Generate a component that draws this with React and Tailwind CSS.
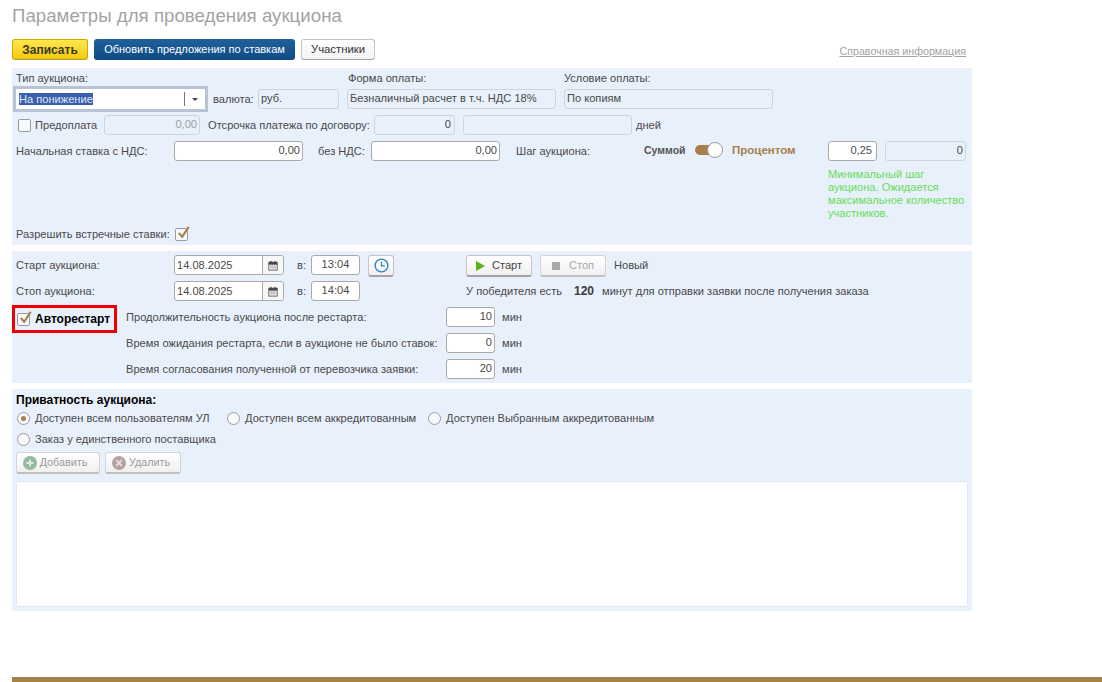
const Field = ({ className = '', children, off = false, left = false }) => (
  <div
    className={`h-5 shrink-0 rounded-[3px] border flex items-center px-1 leading-none whitespace-nowrap ${
      off ? 'bg-[#e8f0fb] border-[#cfd5dc]' : 'bg-white border-[#a9a9a9]'
    } ${left ? 'justify-start' : 'justify-end'} ${className}`}
  >
    {children}
  </div>
)

const Check = ({ checked = false, className = '' }) => (
  <span className={`shrink-0 relative block w-[13px] h-[13px] rounded-[2px] border border-[#9c9c9c] bg-[#f6f8fb] ${className}`}>
    {checked && (
      <svg viewBox="0 0 16 16" className="absolute left-[0px] top-[-4px] w-[15px] h-[15px]" fill="none">
        <path d="M3 8.5 L6.6 12.5 L13.5 2" stroke="#a67f4b" strokeWidth="2.2" />
      </svg>
    )}
  </span>
)

const Radio = ({ checked = false }) => (
  <span className="shrink-0 w-[13px] h-[13px] rounded-full border border-[#9c9c9c] bg-[#f8f9fb] flex items-center justify-center">
    {checked && <span className="w-[5px] h-[5px] rounded-full bg-[#a67f4b]" />}
  </span>
)

const Calendar = () => (
  <svg viewBox="0 0 12 12" className="w-[10px] h-[11px]">
    <rect x="1" y="2" width="10" height="9.5" fill="#fff" stroke="#444" />
    <rect x="1" y="2" width="10" height="3" fill="#444" />
    <rect x="3" y="0.5" width="1.4" height="2.5" fill="#444" />
    <rect x="7.6" y="0.5" width="1.4" height="2.5" fill="#444" />
    <path d="M3 6.6h1.2M5.4 6.6h1.2M7.8 6.6h1.2M3 8.8h1.2M5.4 8.8h1.2M7.8 8.8h1.2" stroke="#444" strokeWidth="1.2" />
  </svg>
)

const DateField = ({ value }) => (
  <div className="h-5 w-[110px] shrink-0 rounded-[3px] border border-[#a9a9a9] bg-white flex items-center">
    <span className="flex-1 pl-[2px]">{value}</span>
    <span className="w-[21px] h-full border-l border-[#a9a9a9] flex items-center justify-center bg-[#f7f7f7] rounded-r-[3px]">
      <Calendar />
    </span>
  </div>
)

const GrayButton = ({ className = '', children }) => (
  <div className={`h-[22px] shrink-0 rounded-[3px] border border-[#c4c4c4] border-b-[#a3a3a3] border-b-2 bg-gradient-to-b from-white to-[#f0f0f0] flex items-center justify-center whitespace-nowrap ${className}`}>
    {children}
  </div>
)

const DelayRow = ({ label, value }) => (
  <div className="h-5 flex items-center">
    <span className="w-[320px] shrink-0 whitespace-nowrap">{label}</span>
    <Field className="w-[49px] !px-[2px]">{value}</Field>
    <span className="ml-[7px]">мин</span>
  </div>
)

const App = () => {
  return (
    <div className="w-[1102px] h-[682px] bg-white overflow-hidden flex flex-col pl-3 text-[11.1px] text-[#4a4a4a] font-['Liberation_Sans',Arial,sans-serif]">
      <div className="h-[39px] shrink-0 pt-[5px] text-[18.7px] leading-[22px] text-[#a3a3a3]">Параметры для проведения аукциона</div>

      <div className="h-[29px] shrink-0 flex items-start w-[960px]">
        <div className="h-[21px] w-[76px] rounded-[3px] border border-[#c9a800] border-b-[#a89a4a] bg-gradient-to-b from-[#ffe84a] to-[#f5c800] flex items-center justify-center font-bold text-[12px] text-[#3a3a20]">Записать</div>
        <div className="h-[21px] w-[201px] ml-[6px] rounded-[3px] bg-gradient-to-b from-[#1f609e] to-[#0e4b84] flex items-center justify-center text-white text-[11px]">Обновить предложения по ставкам</div>
        <div className="h-[21px] w-[74px] ml-[6px] rounded-[3px] border border-[#c4c4c4] border-b-[#a3a3a3] bg-gradient-to-b from-white to-[#f2f2f2] flex items-center justify-center text-[#333] text-[11.3px]">Участники</div>
        <a className="ml-auto mr-[6px] mt-[5px] text-[10.7px] text-[#a3a3a3] underline leading-[14px]">Справочная информация</a>
      </div>

      {/* Тип аукциона, оплата, ставки */}
      <section className="w-[960px] h-[177px] shrink-0 bg-[#e8f0fb] flex flex-col">
        <div className="h-[21px] flex items-center pl-1 shrink-0">
          <span className="w-[332px]">Тип аукциона:</span>
          <span className="w-[216px]">Форма оплаты:</span>
          <span>Условие оплаты:</span>
        </div>
        <div className="h-5 flex items-center pl-1 shrink-0">
          <div className="w-[189px] h-5 shrink-0 bg-white ring-3 ring-[#b8c4d4] flex items-center">
            <span className="flex-1 pl-[3px]"><span className="bg-[#3a5fb0] text-[#dfe6f5]">На понижение</span></span>
            <span className="w-[21px] h-[14px] border-l border-[#777] flex items-center justify-center">
              <span className="border-x-[3px] border-x-transparent border-t-[3px] border-t-[#444]" />
            </span>
          </div>
          <span className="ml-2 w-[45px] shrink-0">валюта:</span>
          <Field off left className="w-[81px] !px-[2px]">руб.</Field>
          <Field off left className="w-[209px] ml-2 !px-[2px]">Безналичный расчет в т.ч. НДС 18%</Field>
          <Field off left className="w-[209px] ml-2 !px-[2px]">По копиям</Field>
        </div>
        <div className="h-5 mt-[6px] flex items-center pl-[6px] shrink-0">
          <Check />
          <span className="ml-[4px] w-[69px] shrink-0">Предоплата</span>
          <Field off className="w-[96px] text-[#9aa0a6] !px-[2px]">0,00</Field>
          <span className="ml-2 w-[166px] shrink-0 whitespace-nowrap">Отсрочка платежа по договору:</span>
          <Field off className="w-[81px] !px-[3px]">0</Field>
          <Field off className="w-[169px] ml-2" />
          <span className="ml-1">дней</span>
        </div>
        <div className="h-5 mt-[6px] flex items-center pl-1 shrink-0">
          <span className="w-[158px] shrink-0">Начальная ставка с НДС:</span>
          <Field className="w-[129px] !px-[2px]">0,00</Field>
          <span className="ml-[15px] w-[53px] shrink-0">без НДС:</span>
          <Field className="w-[129px] !px-[2px]">0,00</Field>
          <span className="ml-[16px] w-[128px] shrink-0">Шаг аукциона:</span>
          <span className="w-[51px] shrink-0 font-bold text-[10.5px] text-[#555]">Суммой</span>
          <span className="relative w-[28px] h-[16px] shrink-0 -translate-y-[1px]">
            <span className="absolute left-0 top-[3px] w-[20px] h-[10px] rounded-full bg-[#a67f4b]" />
            <span className="absolute right-0 top-0 w-[16px] h-[16px] rounded-full bg-white border border-[#9a9a9a]" />
          </span>
          <span className="ml-[9px] w-[96px] shrink-0 font-bold text-[11.5px] text-[#a67f4b]">Процентом</span>
          <Field className="w-[49px]">0,25</Field>
          <Field off className="w-[81px] ml-2 !px-[2px]">0</Field>
        </div>
        <div className="mt-[7px] ml-[816px] w-[140px] h-[52px] shrink-0 leading-[13px] text-[#66dd55]">
          Минимальный шаг<br />аукциона. Ожидается<br />максимальное количество<br />участников.
        </div>
        <div className="mt-[4px] h-5 flex items-center pl-1 shrink-0">
          <span className="w-[159px] shrink-0 whitespace-nowrap">Разрешить встречные ставки:</span>
          <Check checked />
        </div>
      </section>

      {/* Старт и стоп */}
      <section className="w-[960px] h-[132px] mt-[6px] shrink-0 bg-[#e8f0fb] flex flex-col pt-1">
        <div className="h-5 flex items-center pl-1 shrink-0">
          <span className="w-[158px] shrink-0">Старт аукциона:</span>
          <DateField value="14.08.2025" />
          <span className="ml-[13px] w-[14px] shrink-0">в:</span>
          <Field left className="w-[49px] !justify-center">13:04</Field>
          <div className="ml-2 h-5 flex items-start">
            <GrayButton className="w-[26px]">
              <svg viewBox="0 0 16 16" className="w-[15px] h-[15px]" fill="none" stroke="#2a86c8" strokeWidth="1.5">
                <circle cx="8" cy="8" r="6.8" />
                <path d="M8 4v4.4h3.6" />
              </svg>
            </GrayButton>
          </div>
          <div className="ml-[72px] h-5 flex items-start">
            <GrayButton className="w-[66px] gap-[7px] text-[#444]">
              <span className="border-y-[5px] border-y-transparent border-l-[9px] border-l-[#5cb312]" />
              Старт
            </GrayButton>
            <GrayButton className="w-[66px] ml-2 gap-[9px] text-[#a8a8a8] border-[#d4d4d4] border-b-[#c0c0c0]">
              <span className="w-[8px] h-[8px] bg-[#a9a9a9]" />
              Стоп
            </GrayButton>
          </div>
          <span className="ml-2">Новый</span>
        </div>
        <div className="h-5 mt-[6px] flex items-center pl-1 shrink-0">
          <span className="w-[158px] shrink-0">Стоп аукциона:</span>
          <DateField value="14.08.2025" />
          <span className="ml-[13px] w-[14px] shrink-0">в:</span>
          <Field left className="w-[49px] !justify-center">14:04</Field>
          <span className="ml-[106px] w-[108px] shrink-0 whitespace-nowrap">У победителя есть</span>
          <b className="w-[28px] shrink-0 text-[12px] text-[#3a3a3a]">120</b>
          <span className="whitespace-nowrap">минут для отправки заявки после получения заказа</span>
        </div>
        <div className="flex items-start mt-1 shrink-0">
          <div className="w-[105px] h-[28px] shrink-0 border-[3px] border-[#f00000] flex items-center pl-[2px]">
            <Check checked />
            <span className="ml-[5px] font-bold text-[12px] text-black">Авторестарт</span>
          </div>
          <div className="ml-[9px] mt-[2px] flex flex-col gap-[6px]">
            <DelayRow label="Продолжительность аукциона после рестарта:" value="10" />
            <DelayRow label="Время ожидания рестарта, если в аукционе не было ставок:" value="0" />
            <DelayRow label="Время согласования полученной от перевозчика заявки:" value="20" />
          </div>
        </div>
      </section>

      {/* Приватность */}
      <section className="w-[960px] h-[222px] mt-[6px] shrink-0 bg-[#e8f0fb] flex flex-col pl-1">
        <div className="h-[19px] flex items-end font-bold text-[12px] text-black leading-[15px]">Приватность аукциона:</div>
        <div className="h-[20px] flex items-center pl-[1px]">
          <Radio checked />
          <span className="ml-[5px] w-[192px] shrink-0 whitespace-nowrap">Доступен всем пользователям УЛ</span>
          <Radio />
          <span className="ml-[5px] w-[183px] shrink-0 whitespace-nowrap">Доступен всем аккредитованным</span>
          <Radio />
          <span className="ml-[5px] whitespace-nowrap">Доступен Выбранным аккредитованным</span>
        </div>
        <div className="h-[20px] mt-[1px] flex items-center pl-[1px]">
          <Radio />
          <span className="ml-[5px]">Заказ у единственного поставщика</span>
        </div>
        <div className="flex mt-[3px] shrink-0">
          <GrayButton className="w-[84px] pr-[6px] gap-[3px] text-[10.8px] text-[#9a9a9a] border-[#d4d4d4] border-b-[#c0c0c0]">
            <svg viewBox="0 0 14 14" className="w-[14px] h-[14px]">
              <circle cx="7" cy="7" r="7" fill="#93b8a0" />
              <path d="M7 3.5v7M3.5 7h7" stroke="#dfe9e2" strokeWidth="2" />
            </svg>
            Добавить
          </GrayButton>
          <GrayButton className="w-[76px] ml-[5px] pr-[4px] gap-[3px] text-[10.8px] text-[#9a9a9a] border-[#d4d4d4] border-b-[#c0c0c0]">
            <svg viewBox="0 0 14 14" className="w-[14px] h-[14px]">
              <circle cx="7" cy="7" r="7" fill="#b8a0a0" />
              <path d="M4.2 4.2l5.6 5.6M9.8 4.2l-5.6 5.6" stroke="#e9e0e0" strokeWidth="1.8" />
            </svg>
            Удалить
          </GrayButton>
        </div>
        <div className="w-[952px] h-[126px] mt-[7px] shrink-0 bg-white border border-[#e3e6ea]" />
      </section>

      <div className="h-[5px] mt-[66px] shrink-0 bg-[#a67f4b]" />
    </div>
  )
}

export default App
